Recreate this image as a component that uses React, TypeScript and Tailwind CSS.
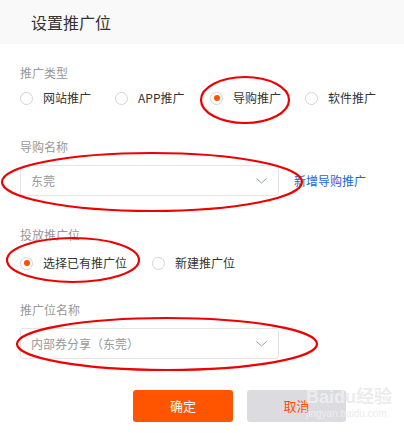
const font = { fontFamily: '"Noto Sans CJK SC", "Noto Sans", sans-serif' };

const Radio = ({ label, checked }: { label: string; checked?: boolean }) => (
  <label className="flex items-center">
    <span className="flex h-[13px] w-[13px] items-center justify-center rounded-full border border-[#d4d4d4] bg-white">
      {checked && <span className="h-[6px] w-[6px] rounded-full bg-[#ff5000]" />}
    </span>
    <span className="ml-[10px] text-[12px] leading-[20px] text-[#333]">{label}</span>
  </label>
);

const Select = ({ value }: { value: string }) => (
  <div className="flex h-[31px] w-[259px] items-center justify-between rounded-[3px] border border-[#e5e5e5] bg-white pl-[10px] pr-[11px]">
    <span className="text-[12px] text-[#999]">{value}</span>
    <svg width="11" height="6" viewBox="0 0 11 6" fill="none">
      <path d="M0.5 0.5 L5.5 5 L10.5 0.5" stroke="#9aa3ad" strokeWidth="1" />
    </svg>
  </div>
);

const Label = ({ children, className }: { children: string; className: string }) => (
  <div className={`text-[12px] leading-[16px] text-[#999] ${className}`}>{children}</div>
);

export default function App() {
  return (
    <div className="relative h-[433px] w-[404px] overflow-hidden bg-white" style={font}>
      <div className="flex h-[44px] items-center bg-[#f9f9f9] px-[31px] text-[16px] text-[#333]">设置推广位</div>

      <div className="px-5">
        <Label className="mt-[21px]">推广类型</Label>
        <div className="mt-[7px] flex h-[20px] items-center">
          <div className="w-[95px]"><Radio label="网站推广" /></div>
          <div className="w-[95px]"><Radio label="APP推广" /></div>
          <div className="w-[95px]"><Radio label="导购推广" checked /></div>
          <Radio label="软件推广" />
        </div>

        <Label className="mt-[31px]">导购名称</Label>
        <div className="mt-[10px] flex items-center">
          <Select value="东莞" />
          <a className="ml-[15px] text-[12px] text-[#1a66d6]">新增导购推广</a>
        </div>

        <Label className="mt-[31px]">投放推广位</Label>
        <div className="mt-[10px] flex h-[20px] items-center">
          <div className="w-[132px]"><Radio label="选择已有推广位" checked /></div>
          <Radio label="新建推广位" />
        </div>

        <Label className="mt-[29px]">推广位名称</Label>
        <div className="mt-[10px]">
          <Select value="内部券分享（东莞）" />
        </div>

        <div className="ml-[113px] mt-[31px] flex gap-[14px]">
          <button className="h-[32px] w-[100px] rounded-[3px] bg-[#ff5500] text-[13px] text-white">确定</button>
          <button className="h-[32px] w-[99px] rounded-[3px] bg-[#dcdce0] text-[13px] text-[#ff4d00]">取消</button>
        </div>
      </div>

      {/* watermark */}
      <div
        className="pointer-events-none absolute left-[306px] top-[388px] flex flex-col items-start leading-none text-[#ececef]"
        style={{ fontFamily: '"Liberation Sans", "Noto Sans CJK SC", sans-serif' }}
      >
        <span className="text-[18px] font-bold">Baidu经验</span>
        <span className="mt-[3px] text-[10px]">jingyan.baidu.com</span>
      </div>

      {/* red annotation ellipses */}
      <svg className="pointer-events-none absolute left-0 top-0" width="404" height="433">
        <g fill="none" stroke="#ee0000" strokeWidth="2.2">
          <ellipse cx="245" cy="100" rx="44" ry="23" />
          <ellipse cx="152" cy="182" rx="150" ry="29" />
          <ellipse cx="73" cy="260" rx="66" ry="22" />
          <ellipse cx="167" cy="344" rx="150" ry="26" />
        </g>
      </svg>
    </div>
  );
}
